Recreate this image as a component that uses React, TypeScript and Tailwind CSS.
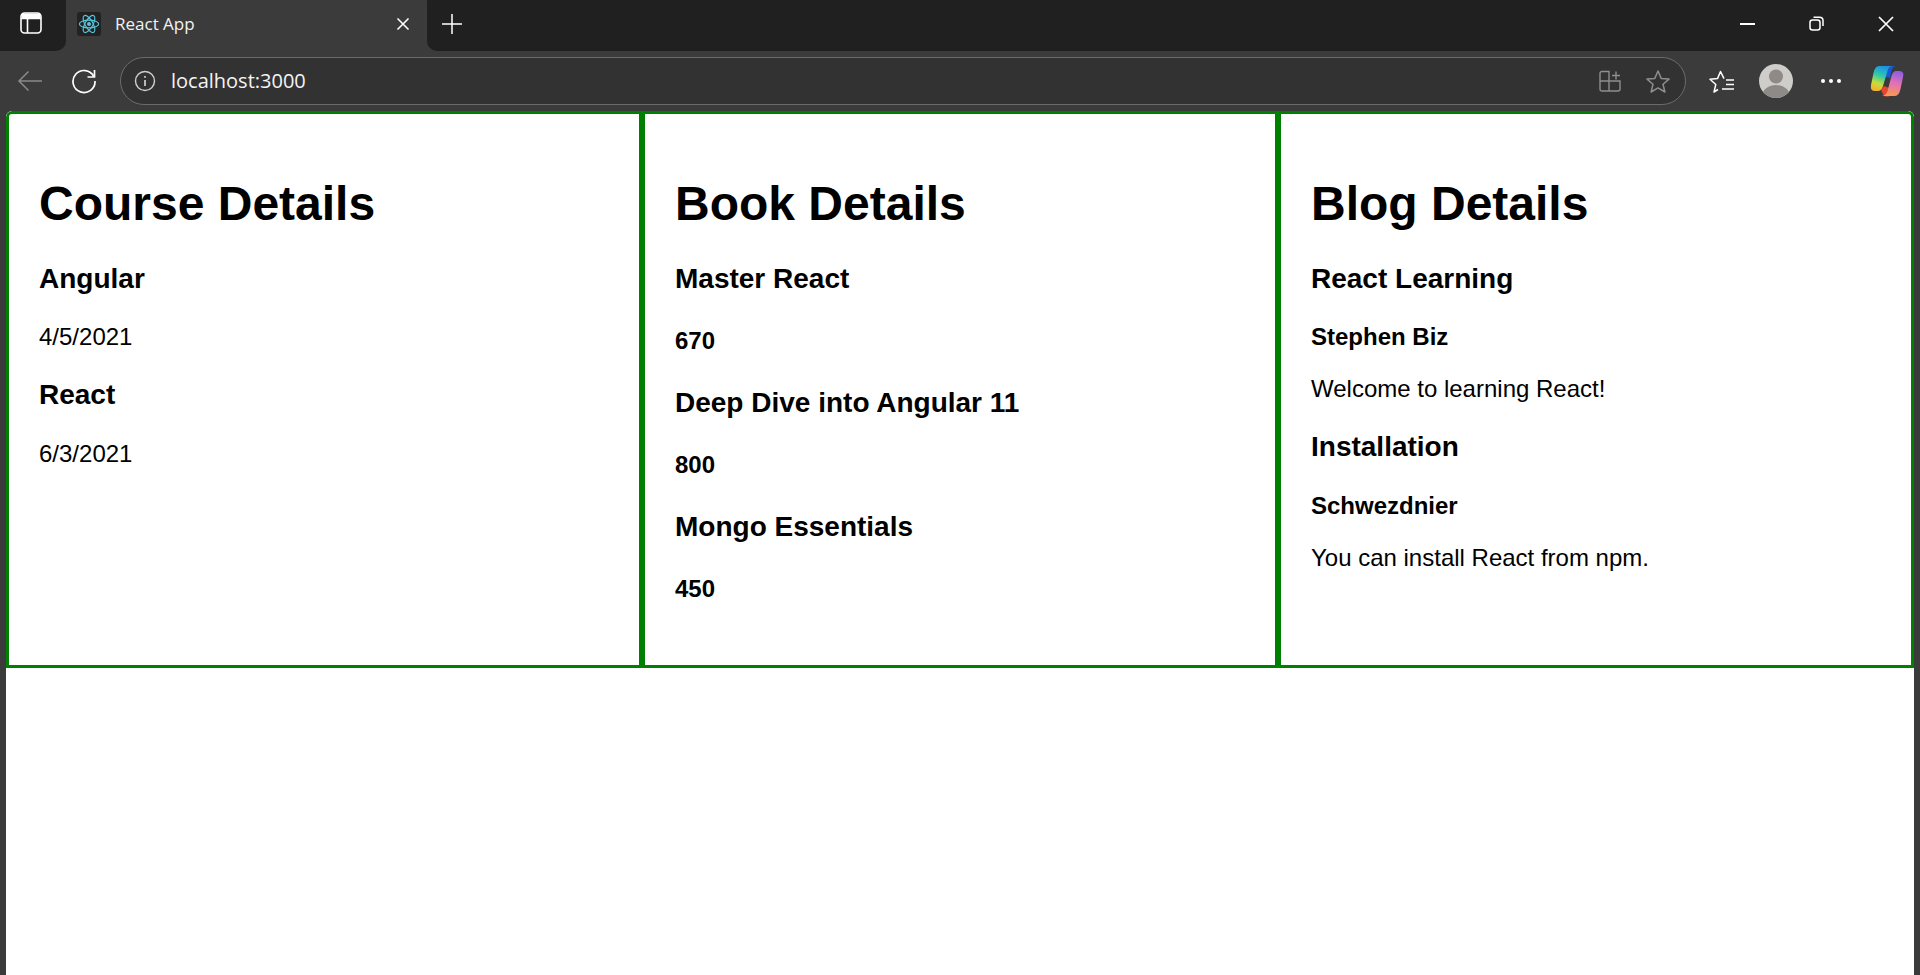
import React from 'react'

const uiFont = 'font-["Open_Sans","Noto_Sans",sans-serif]'

const ReactLogo = () => (
  <svg viewBox="-12 -12 24 24" className="w-[22px] h-[22px]" fill="none" stroke="#58c4dc" strokeWidth="1.3">
    <circle r="2.2" fill="#58c4dc" stroke="none" />
    <ellipse rx="10.5" ry="4.2" />
    <ellipse rx="10.5" ry="4.2" transform="rotate(60)" />
    <ellipse rx="10.5" ry="4.2" transform="rotate(120)" />
  </svg>
)

const CopilotLogo = () => (
  <svg viewBox="0 0 34 32" className="w-[34px] h-[32px]">
    <defs>
      <linearGradient id="cpLeft" x1="0.6" y1="0" x2="0.3" y2="1">
        <stop offset="0" stopColor="#1b8fe8" />
        <stop offset="0.4" stopColor="#2fc9a8" />
        <stop offset="0.72" stopColor="#c8dc3c" />
        <stop offset="1" stopColor="#f5b02e" />
      </linearGradient>
      <linearGradient id="cpRight" x1="0.6" y1="0" x2="0.4" y2="1">
        <stop offset="0" stopColor="#8f5fe0" />
        <stop offset="0.45" stopColor="#e070b8" />
        <stop offset="1" stopColor="#fb9a4e" />
      </linearGradient>
    </defs>
    <path d="M11 25 L14 31 Q17 32 20 31 L22 24 L14 21 Z" fill="#e8442e" />
    <path d="M17 6 Q19 1 23 1 L26 1 Q22 1 21 8 L20 13 L14 11 Z" fill="#1a56d8" />
    <path d="M9 1 L23 1 Q19 1 17.5 6 L13 21 Q11.5 26 8 26 L5 26 Q0 26 1 20 L3.5 8 Q5 1 9 1 Z" fill="url(#cpLeft)" />
    <path d="M25 31 L11 31 Q16 31 17.5 26 L21.5 11 Q23 6 26 6 L29 6 Q34.5 6 33 12 L30.5 24 Q29 31 25 31 Z" fill="url(#cpRight)" />
  </svg>
)

const Course = ({ name, date }: { name: string; date: string }) => (
  <div>
    <h3 className="text-[28px] leading-[32.2px] font-bold my-[28px]">{name}</h3>
    <p className="text-[24px] leading-[28px] my-[24px]">{date}</p>
  </div>
)

const Book = ({ name, price }: { name: string; price: number }) => (
  <div>
    <h3 className="text-[28px] leading-[32.2px] font-bold my-[28px]">{name}</h3>
    <h4 className="text-[24px] leading-[27.6px] font-bold my-[32px]">{price}</h4>
  </div>
)

const Blog = ({ title, author, text }: { title: string; author: string; text: string }) => (
  <div>
    <h3 className="text-[28px] leading-[32.2px] font-bold my-[28px]">{title}</h3>
    <p className="text-[24px] leading-[28px] font-bold my-[24px]">{author}</p>
    <p className="text-[24px] leading-[28px] my-[24px]">{text}</p>
  </div>
)

const courses = [
  { name: 'Angular', date: '4/5/2021' },
  { name: 'React', date: '6/3/2021' },
]

const books = [
  { name: 'Master React', price: 670 },
  { name: 'Deep Dive into Angular 11', price: 800 },
  { name: 'Mongo Essentials', price: 450 },
]

const blogs = [
  { title: 'React Learning', author: 'Stephen Biz', text: 'Welcome to learning React!' },
  { title: 'Installation', author: 'Schwezdnier', text: 'You can install React from npm.' },
]

const BrowserChrome = () => (
  <div className={`bg-[#3b3b3b] text-white ${uiFont}`}>
    {/* Tab strip */}
    <div className="flex h-[51px]">
      <div className="w-[66px] bg-[#202020] rounded-br-[10px] flex items-center justify-center pr-[4px] pb-[5px]">
        <svg width="22" height="22" viewBox="0 0 22 22" fill="none" stroke="#fff" strokeWidth="1.6">
          <rect x="1" y="1" width="20" height="20" rx="3.5" />
          <path d="M1 6.5H21M7.5 6.5V21" />
          <rect x="1.5" y="1.5" width="19" height="5" rx="2" fill="#fff" stroke="none" />
        </svg>
      </div>
      <div className="w-[361px] bg-[#3b3b3b] rounded-t-[10px] flex items-center pl-[11px] pr-[17px] pb-[3px]">
        <div className="w-[24px] h-[24px] bg-[#222222] rounded-[3px] flex items-center justify-center">
          <ReactLogo />
        </div>
        <span className="ml-[14px] mb-[2px] text-[17px] leading-none flex-1 text-[#f2f2f2]">React App</span>
        <svg width="14" height="14" viewBox="0 0 14 14" stroke="#fff" strokeWidth="1.6">
          <path d="M1.5 1.5L12.5 12.5M12.5 1.5L1.5 12.5" />
        </svg>
      </div>
      <div className="flex-1 bg-[#202020] rounded-bl-[10px] flex items-center pl-[14px] pb-[4px]">
        <svg width="22" height="22" viewBox="0 0 22 22" stroke="#fff" strokeWidth="1.5">
          <path d="M11 1V21M1 11H21" />
        </svg>
        <div className="ml-auto flex items-center">
          <div className="w-[70px] flex justify-center">
            <div className="w-[15px] h-[2px] bg-white" />
          </div>
          <div className="w-[68px] flex justify-center">
            <svg width="15" height="15" viewBox="0 0 15 15" fill="none" stroke="#fff" strokeWidth="1.5">
              <rect x="1" y="4" width="10" height="10" rx="2.5" />
              <path d="M4.5 1.2H10.5Q14 1.2 14 4.5V10" />
            </svg>
          </div>
          <div className="w-[67px] flex justify-center pr-[2px] ml-[3px]">
            <svg width="16" height="16" viewBox="0 0 16 16" stroke="#fff" strokeWidth="1.7">
              <path d="M1 1L15 15M15 1L1 15" />
            </svg>
          </div>
        </div>
      </div>
    </div>

    {/* Address bar row */}
    <div className="flex items-center h-[60px]">
      <div className="w-[60px] flex justify-center">
        <svg width="26" height="22" viewBox="0 0 26 22" fill="none" stroke="#8a8a8a" strokeWidth="1.5">
          <path d="M25 11H2M11.5 1.5L2 11L11.5 20.5" />
        </svg>
      </div>
      <div className="w-[48px] flex justify-center">
        <svg width="26" height="26" viewBox="0 0 26 26" fill="none" stroke="#fff" strokeWidth="1.7">
          <path d="M22.8 8.5A11 11 0 1 0 24 13" />
          <path d="M23.5 2V9H16.5" />
        </svg>
      </div>
      <div className="ml-[12px] w-[1566px] h-[48px] rounded-full bg-[#323232] border-[1.5px] border-[#6b6b6b] flex items-center pl-[13px] pr-[14px]">
        <svg width="22" height="22" viewBox="0 0 22 22" fill="none" stroke="#d0d0d0" strokeWidth="1.4">
          <circle cx="11" cy="11" r="9.5" />
          <path d="M11 10V16M11 6V7.8" strokeWidth="1.7" />
        </svg>
        <span className="ml-[15px] text-[20px] leading-none text-[#f4f4f4]">localhost:3000</span>
        <div className="ml-auto flex items-center gap-[24px]">
          <svg width="22" height="22" viewBox="0 0 22 22" fill="none" stroke="#8e8e8e" strokeWidth="1.4">
            <path d="M1 3.5Q1 1.5 3 1.5H10V21H3Q1 21 1 19ZM10 11H21V19Q21 21 19 21H10M1 11H10M13 5.5H21M17 1.5V9.5" />
          </svg>
          <svg width="26" height="25" viewBox="0 0 26 25" fill="none" stroke="#8e8e8e" strokeWidth="1.5" strokeLinejoin="round">
            <path d="M13 2L16.2 9.4L24 10.1L18 15.3L19.9 23L13 18.9L6.1 23L8 15.3L2 10.1L9.8 9.4Z" />
          </svg>
        </div>
      </div>
      <div className="ml-[23px] w-[26px] flex justify-center">
        <svg width="26" height="25" viewBox="0 0 26 25" fill="none" stroke="#fff" strokeWidth="1.5" strokeLinejoin="round">
          <path d="M9 20.5L5 23L6.8 15.5L1 10.3L8.5 9.6L11.5 2.5L15 9.6M17 11H25M17 15.5H25M13 20H25" />
        </svg>
      </div>
      <div className="ml-[24px] w-[34px] h-[34px] rounded-full bg-[#cfcdc9] overflow-hidden flex justify-center">
        <svg width="34" height="34" viewBox="0 0 34 34" fill="#8d8a87">
          <circle cx="17" cy="12.5" r="7" />
          <ellipse cx="17" cy="31" rx="13.5" ry="10" />
        </svg>
      </div>
      <div className="ml-[28px] flex gap-[4px]">
        <div className="w-[4px] h-[4px] rounded-full bg-white" />
        <div className="w-[4px] h-[4px] rounded-full bg-white" />
        <div className="w-[4px] h-[4px] rounded-full bg-white" />
      </div>
      <div className="ml-[29px]">
        <CopilotLogo />
      </div>
    </div>
  </div>
)

export default function App() {
  return (
    <div className="h-[975px] overflow-hidden flex flex-col bg-[#3b3b3b] text-black font-['Liberation_Sans',Arial,sans-serif]">
      <BrowserChrome />
      <div className="flex-1 mx-[6px] bg-white rounded-t-[6px] overflow-hidden">
        <div className="grid grid-cols-3">
          <div className="border-[3px] border-[green] rounded-tl-[6px] p-[30px]">
            <h1 className="text-[48px] leading-[55.2px] font-bold my-[32px]">Course Details</h1>
            {courses.map((c) => (
              <Course key={c.name} {...c} />
            ))}
          </div>
          <div className="border-[3px] border-[green] p-[30px]">
            <h1 className="text-[48px] leading-[55.2px] font-bold my-[32px]">Book Details</h1>
            {books.map((b) => (
              <Book key={b.name} {...b} />
            ))}
          </div>
          <div className="border-[3px] border-[green] rounded-tr-[6px] p-[30px]">
            <h1 className="text-[48px] leading-[55.2px] font-bold my-[32px]">Blog Details</h1>
            {blogs.map((b) => (
              <Blog key={b.title} {...b} />
            ))}
          </div>
        </div>
      </div>
    </div>
  )
}
